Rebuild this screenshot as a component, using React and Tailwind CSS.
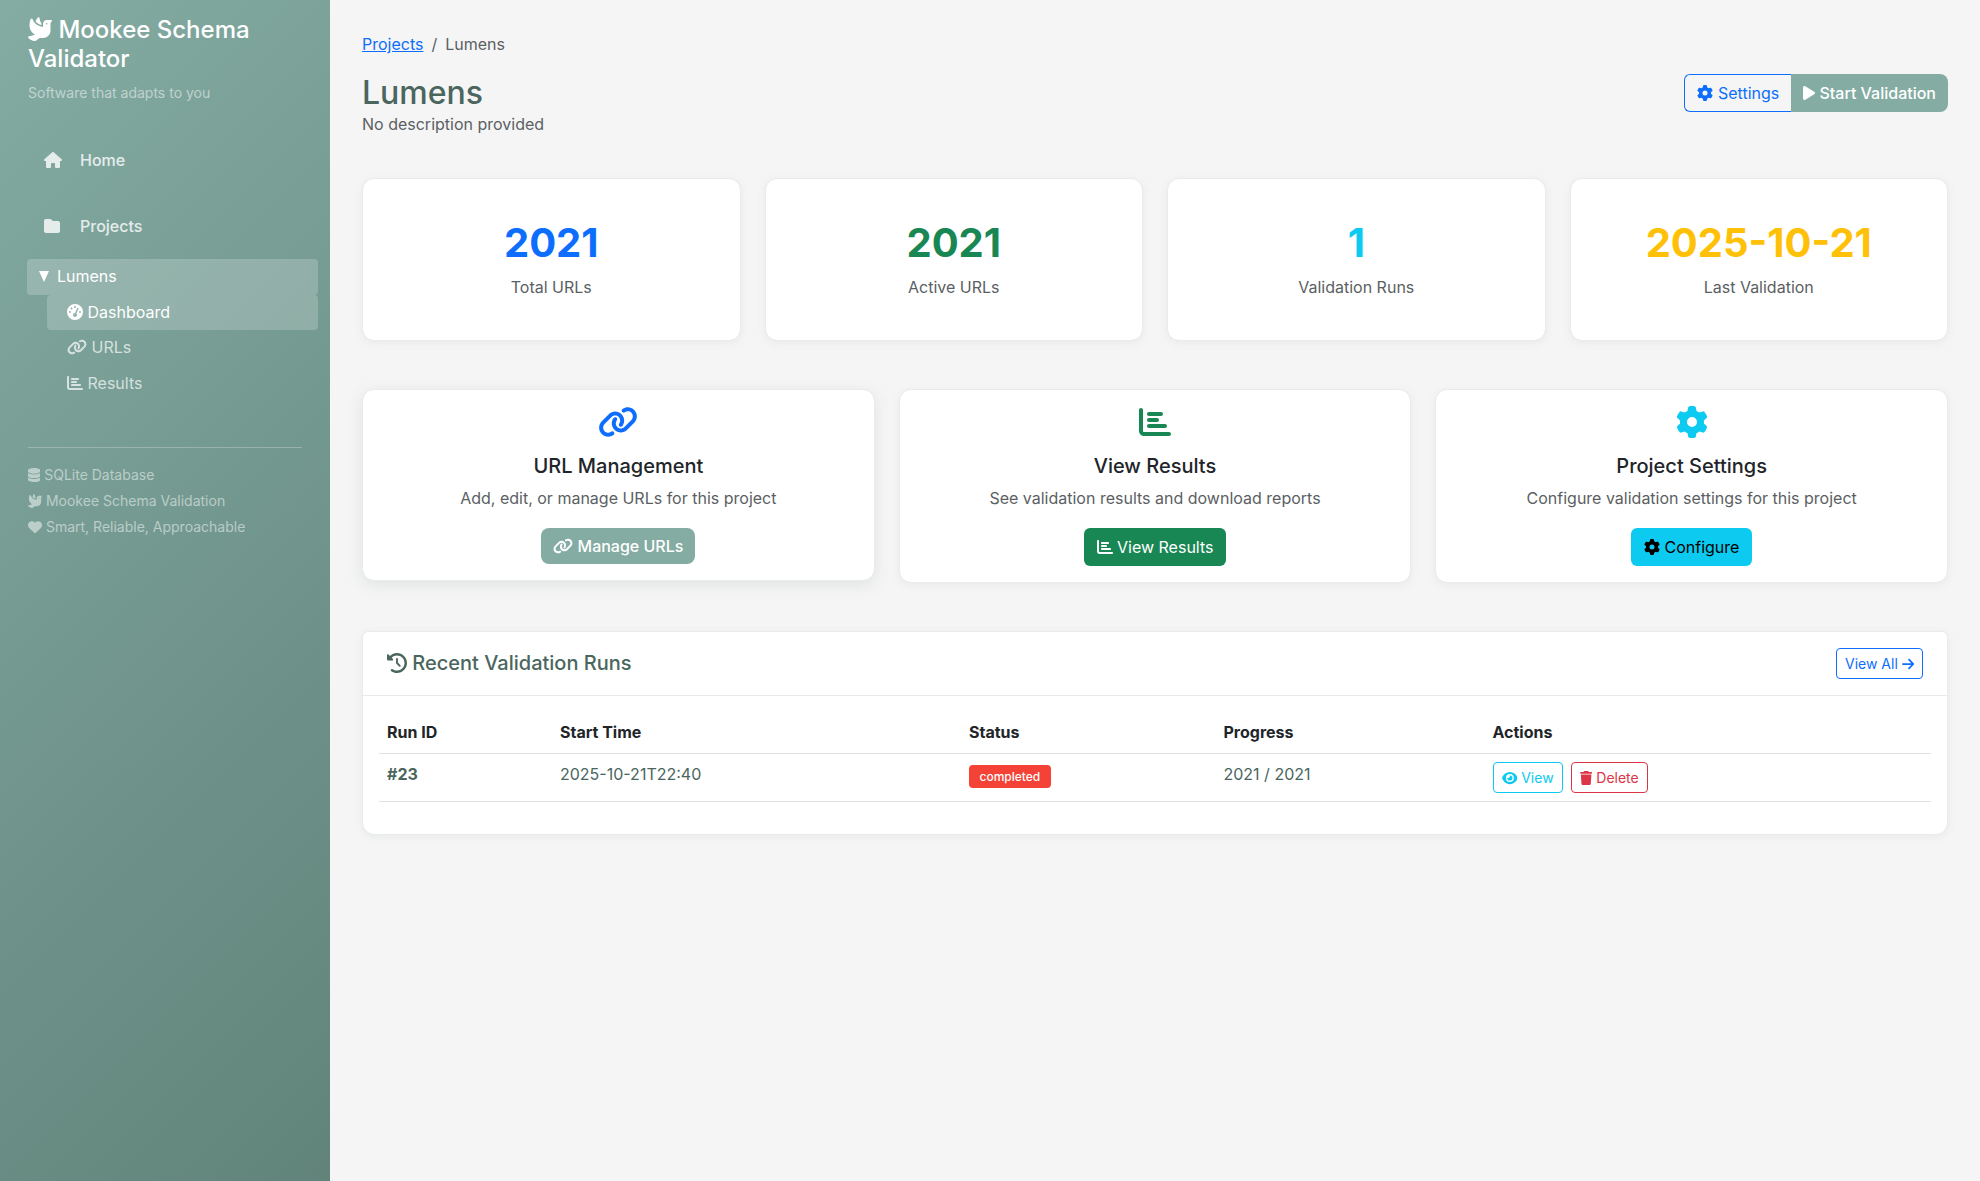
import React from "react";
import {
  FaDove, FaHouse, FaFolder, FaGaugeHigh, FaLink, FaChartBar, FaDatabase, FaHeart,
  FaGear, FaPlay, FaClockRotateLeft, FaArrowRight, FaEye, FaTrash,
} from "react-icons/fa6";

// Glyphs that are not square get their own width relative to the font size.
const glyphWidth = new Map([
  [FaLink, "w-[1.25em]"],
  [FaHouse, "w-[1.125em]"],
  [FaEye, "w-[1.125em]"],
  [FaDatabase, "w-[0.875em]"],
  [FaArrowRight, "w-[0.875em]"],
  [FaTrash, "w-[0.875em]"],
  [FaPlay, "w-[0.75em]"],
]);

function Icon({ as: Glyph }) {
  return <Glyph className={`inline-block h-[1em] shrink-0 align-[-0.125em] ${glyphWidth.get(Glyph) ?? "w-[1em]"}`} />;
}

function Sidebar() {
  return (
    <aside className="flex w-[330px] shrink-0 flex-col bg-linear-135 from-[#84ACA3] to-[#61837A] pt-4 text-white">
      <div className="px-7">
        <h4 className="mb-1.5 text-2xl leading-[28.8px] font-medium">
          <Icon as={FaDove} /> Mookee Schema Validator
        </h4>
        <p className="leading-[25.6px] text-white/50">
          <small className="text-sm leading-[22.4px]">Software that adapts to you</small>
        </p>
      </div>

      <nav className="mt-[21.8px] flex flex-col">
        <a className="flex h-[66px] items-center pl-11 font-medium text-white/80">
          <span className="w-9 leading-none"><Icon as={FaHouse} /></span>
          <span className="pt-0.5">Home</span>
        </a>
        <a className="flex h-[66px] items-center pl-11 font-medium text-white/80">
          <span className="w-9 leading-none"><Icon as={FaFolder} /></span>
          <span className="pt-0.5">Projects</span>
        </a>
      </nav>

      <div className="mr-3 ml-[27px] flex flex-col">
        <a className="flex h-9 items-center gap-[8.5px] rounded bg-white/20 pl-[11.5px]">
          <svg viewBox="0 0 10 11" className="h-[11px] w-[10px] fill-white"><path d="M0 0h10L5 11z" /></svg>
          <span>Lumens</span>
        </a>
        <div className="ml-5 flex flex-col">
          <a className="h-[35px] rounded bg-white/20 pl-5 leading-[35px]"><Icon as={FaGaugeHigh} /> Dashboard</a>
          <a className="h-9 pl-5 leading-[35px] text-white/70"><Icon as={FaLink} /> URLs</a>
          <a className="h-[35px] pl-5 leading-[35px] text-white/70"><Icon as={FaChartBar} /> Results</a>
        </div>
      </div>

      <div className="mx-7 mt-[46px] border-t border-white/25 pt-[14px] text-sm leading-[26px] text-white/50">
        <div><Icon as={FaDatabase} /> SQLite Database</div>
        <div><Icon as={FaDove} /> Mookee Schema Validation</div>
        <div><Icon as={FaHeart} /> Smart, Reliable, Approachable</div>
      </div>
    </aside>
  );
}

const card = "rounded-xl border border-[#EAECEC] bg-white bg-clip-padding";
const softShadow = "shadow-[0_2px_8px_rgba(74,102,94,0.08)]";

const stats = [
  { value: "2021", label: "Total URLs", color: "text-[#0D6EFD]" },
  { value: "2021", label: "Active URLs", color: "text-[#198754]" },
  { value: "1", label: "Validation Runs", color: "text-[#0DCAF0]" },
  { value: "2025-10-21", label: "Last Validation", color: "text-[#FFC107]" },
];

const actions = [
  {
    icon: FaLink, color: "text-[#0D6EFD]", title: "URL Management",
    text: "Add, edit, or manage URLs for this project", button: "Manage URLs",
    buttonClass: "h-9 rounded-lg bg-[#84ACA3] px-3 font-medium text-white leading-9",
    shadow: "shadow-[0_4px_16px_rgba(74,102,94,0.12)]",
  },
  {
    icon: FaChartBar, color: "text-[#198754]", title: "View Results",
    text: "See validation results and download reports", button: "View Results",
    buttonClass: "h-[38px] rounded-md bg-[#198754] px-[13px] text-white leading-[38px]",
    shadow: softShadow,
  },
  {
    icon: FaGear, color: "text-[#0DCAF0]", title: "Project Settings",
    text: "Configure validation settings for this project", button: "Configure",
    buttonClass: "h-[38px] rounded-md bg-[#0DCAF0] px-[13px] text-black leading-[38px]",
    shadow: softShadow,
  },
];

export default function App() {
  return (
    <div className="flex h-[1181px] w-[1980px] overflow-hidden bg-[#F5F5F5] font-['Inter',sans-serif] text-base leading-[25.6px] text-[#212529]">
      <Sidebar />
      <main className="flex grow flex-col p-8">
        <nav className="mb-4 flex">
          <a className="text-[#0D6EFD] underline">Projects</a>
          <span className="px-2 text-[#5B5F63]">/</span>
          <span className="text-[#5B5F63]">Lumens</span>
        </nav>

        <header className="mb-10 flex items-start justify-between">
          <div>
            <h1 className="text-[32px] leading-[38.4px] font-medium text-[#4A665E]">Lumens</h1>
            <p className="text-[#5B5F63]">No description provided</p>
          </div>
          <div className="flex leading-6">
            <a className="h-[38px] rounded-l-md border border-r-0 border-[#0D6EFD] px-3 py-1.5 text-[#0D6EFD]">
              <Icon as={FaGear} /> Settings
            </a>
            <a className="h-[38px] rounded-r-lg bg-[#84ACA3] px-3 py-[7px] font-medium text-white">
              <Icon as={FaPlay} /> Start Validation
            </a>
          </div>
        </header>

        <section className="mb-12 grid grid-cols-4 gap-6">
          {stats.map((s) => (
            <div key={s.label} className={`${card} ${softShadow} py-10 text-center`}>
              <div className={`mb-2 text-[40px] leading-[48px] font-bold ${s.color}`}>{s.value}</div>
              <p className="text-[#5B5F63]">{s.label}</p>
            </div>
          ))}
        </section>

        <section className="mb-12 grid grid-cols-3 items-start gap-6">
          {actions.map((a) => (
            <div key={a.title} className={`${card} ${a.shadow} flex flex-col items-center p-4`}>
              <div className={`mb-4 flex text-[32px] leading-none ${a.color}`}><Icon as={a.icon} /></div>
              <h5 className="mb-2 text-xl leading-6 font-medium">{a.title}</h5>
              <p className="mb-4 text-[#5B5F63]">{a.text}</p>
              <a className={a.buttonClass}><Icon as={a.icon} /> {a.button}</a>
            </div>
          ))}
        </section>

        <section className={`${card} ${softShadow} rounded-t-md`}>
          <div className="flex items-center justify-between border-b border-[#E9EBEA] px-6 py-4">
            <h5 className="text-xl leading-6 font-medium text-[#4A665E]">
              <Icon as={FaClockRotateLeft} /> Recent Validation Runs
            </h5>
            <a className="rounded border border-[#0D6EFD] px-2 py-1 text-sm leading-[21px] text-[#0D6EFD]">
              View All <Icon as={FaArrowRight} />
            </a>
          </div>
          <div className="p-4">
            <table className="mb-4 w-full table-fixed border-separate border-spacing-0 text-left">
              <colgroup>
                <col className="w-[173px]" />
                <col className="w-[409px]" />
                <col className="w-[254.5px]" />
                <col className="w-[269px]" />
                <col />
              </colgroup>
              <thead>
                <tr>
                  {["Run ID", "Start Time", "Status", "Progress", "Actions"].map((h) => (
                    <th key={h} className="border-b border-[#DEE2E6] p-2 font-bold">{h}</th>
                  ))}
                </tr>
              </thead>
              <tbody className="text-[#4A665E]">
                <tr className="align-top">
                  <td className="border-b border-[#DEE2E6] p-2 font-bold">#23</td>
                  <td className="border-b border-[#DEE2E6] p-2">2025-10-21T22:40</td>
                  <td className="border-b border-[#DEE2E6] p-2">
                    <div className="flex pt-[3px]">
                      <span className="rounded bg-[#F44336] px-[10.5px] text-xs leading-[23px] font-medium text-white">completed</span>
                    </div>
                  </td>
                  <td className="border-b border-[#DEE2E6] p-2">2021 / 2021</td>
                  <td className="border-b border-[#DEE2E6] p-2">
                    <div className="flex gap-[8.5px] text-sm leading-[21px]">
                      <a className="rounded border border-[#0DCAF0] px-2 py-1 text-[#0DCAF0]"><Icon as={FaEye} /> View</a>
                      <a className="rounded border border-[#DC3545] px-2 py-1 text-[#DC3545]"><Icon as={FaTrash} /> Delete</a>
                    </div>
                  </td>
                </tr>
              </tbody>
            </table>
          </div>
        </section>
      </main>
    </div>
  );
}
